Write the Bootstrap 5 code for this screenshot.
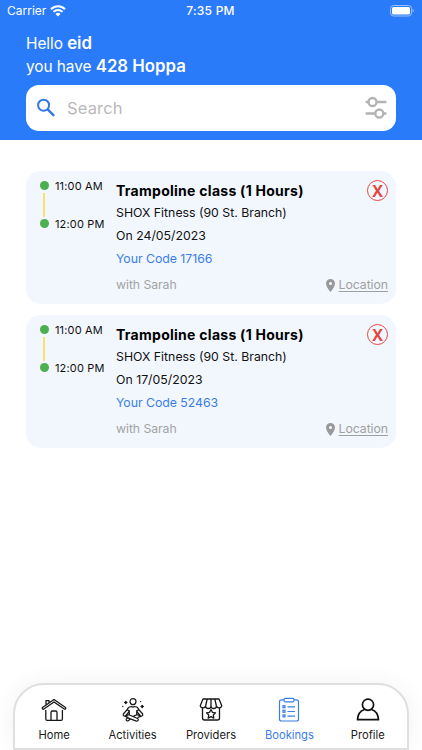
<!DOCTYPE html>
<html lang="en">
<head>
<meta charset="utf-8">
<meta name="viewport" content="width=device-width, initial-scale=1">
<title>Bookings</title>
<link href="https://cdn.jsdelivr.net/npm/bootstrap@5.3.0/dist/css/bootstrap.min.css" rel="stylesheet">
<style>
body{font-family:Inter,"Liberation Sans",sans-serif;color:#111;height:750px;overflow:hidden}
svg{display:block;flex:none}
.top{height:140px;background:#2a7bfa}
.status{height:22px;padding:0 8px 0 7px;font-size:12px;line-height:22px}
.status>*{flex:1 1 0}
.clock{font-weight:500;font-size:12px;letter-spacing:.25px}
.hello{padding:10px 26px 0;font-size:15.4px;line-height:23px;letter-spacing:-.05px}
.hello b{font-weight:600;font-size:16.8px;letter-spacing:0}
.search{height:46px;margin:7px 26px 0;border-radius:13px;padding:0 9px 0 10px}
.search input{font-size:16.5px;color:#555;padding:0 0 0 11px;letter-spacing:.15px}
.search input::placeholder{color:#b9b9b9;opacity:1}
.bookings{padding:31px 26px 0;gap:11px}
.booking{height:133px;background:#f2f7fe;border-radius:15px;padding:0 8px 0 14px}
.times{width:76px;padding-top:7px;font-size:11px;line-height:16px;letter-spacing:.15px}
.slot{gap:6px;height:16px}
.slot i{width:9px;height:9px;border-radius:50%;background:#4caf50;margin-top:-2px}
.link-line{width:2px;height:24px;margin:-1px 0 -1px 3px;background:#f5e36b}
.info{font-size:12.3px;line-height:22.8px;padding-top:8px}
.info h2{font-size:14px;line-height:23px;font-weight:700;color:#000;margin:0;letter-spacing:.27px}
.code{color:#3b7de6;letter-spacing:-.03px}
.soft{color:#a3a3a3}
.foot{margin-top:4px;letter-spacing:-.08px}
.foot a{color:#a0a0a0;text-underline-offset:2px}
.cancel{width:21px;height:21px;border:1px solid #e5463f;border-radius:50%;color:#e5463f;font:700 16px/1 "Open Sans",sans-serif;background:none;padding:0}
.tabs{height:67px;margin:0 13px 0 13px;border:2px solid #dfdfdf;border-radius:31px 31px 0 0;background:#fff;box-shadow:0 0 24px rgba(0,0,0,.055)}
.tab{width:78.6px;padding-top:12px;color:#1a1a1a;font-size:11.2px;line-height:15px}
.tab svg{margin-bottom:5px}
.tab.current{color:#3b7de6}
</style>
<script src="https://cdn.jsdelivr.net/npm/bootstrap@5.3.0/dist/js/bootstrap.bundle.min.js"></script>
</head>
<body class="d-flex flex-column bg-white">
<header class="top text-white">
  <div class="status d-flex align-items-center">
    <div class="d-flex align-items-center gap-1"><span>Carrier</span>
      <svg width="16" height="12" viewBox="0 0 16 12" fill="none" stroke="#fff" stroke-width="2"><path d="M1 4.2a10 10 0 0 1 14 0M3.500 6.900a6.400 6.400 0 0 1 9 0"/><path d="M8 11.500 5.500 9a3.500 3.500 0 0 1 5 0z" fill="#fff" stroke="none"/></svg>
    </div>
    <div class="clock text-center">7:35 PM</div>
    <div class="d-flex justify-content-end">
      <svg width="24" height="12" viewBox="0 0 24 12"><rect x=".5" y=".5" width="21" height="10.5" rx="3" fill="none" stroke="#9cc1fd"/><rect x="2" y="2" width="18" height="7.5" rx="1.5" fill="#fff"/><path d="M22.7 4v3.5q1.3-.6 1.3-1.7T22.7 4" fill="#9cc1fd"/></svg>
    </div>
  </div>
  <div class="hello"><div>Hello <b>eid</b></div><div>you have <b>428 Hoppa</b></div></div>
  <div class="search bg-white d-flex align-items-center">
    <svg width="20" height="20" viewBox="0 0 20 20" fill="none" stroke="#3478e5" stroke-width="2"><circle cx="7.6" cy="7.2" r="5.5"/><path d="m11.7 11.3 6.4 6.5" stroke-width="2.4"/></svg>
    <input class="form-control border-0 shadow-none bg-transparent" placeholder="Search" aria-label="Search">
    <svg width="22" height="24" viewBox="0 0 22 24" fill="none" stroke="#b3b3b3" stroke-width="2.3" stroke-linecap="round"><path d="M1.500 6h2M12 6h8.500M1.500 17.500h8.500M18.500 17.500h2"/><circle cx="7.500" cy="6" r="4"/><circle cx="14.300" cy="17.500" r="4"/></svg>
  </div>
</header>

<main class="bookings d-flex flex-column flex-grow-1">
  <article class="booking d-flex">
    <div class="times">
      <div class="slot d-flex align-items-center"><i></i><span>11:00 AM</span></div>
      <div class="link-line"></div>
      <div class="slot d-flex align-items-center"><i></i><span>12:00 PM</span></div>
    </div>
    <div class="info flex-grow-1">
      <div class="d-flex justify-content-between align-items-center"><h2>Trampoline class (1 Hours)</h2><button class="cancel d-flex align-items-center justify-content-center" aria-label="Cancel">X</button></div>
      <div>SHOX Fitness (90 St. Branch)</div>
      <div>On 24/05/2023</div>
      <div class="code">Your Code 17166</div>
      <div class="foot soft d-flex justify-content-between"><span>with Sarah</span>
        <span class="d-flex align-items-center gap-1"><svg width="9" height="13" viewBox="0 0 9 13"><path fill="#999" fill-rule="evenodd" d="M4.500 0A4.500 4.500 0 0 0 0 4.500C0 7.800 4.500 13 4.500 13S9 7.800 9 4.500A4.500 4.500 0 0 0 4.500 0m0 2.900a1.600 1.600 0 1 1 0 3.200 1.600 1.600 0 0 1 0-3.200"/></svg><a href="#">Location</a></span></div>
    </div>
  </article>
  <article class="booking d-flex">
    <div class="times">
      <div class="slot d-flex align-items-center"><i></i><span>11:00 AM</span></div>
      <div class="link-line"></div>
      <div class="slot d-flex align-items-center"><i></i><span>12:00 PM</span></div>
    </div>
    <div class="info flex-grow-1">
      <div class="d-flex justify-content-between align-items-center"><h2>Trampoline class (1 Hours)</h2><button class="cancel d-flex align-items-center justify-content-center" aria-label="Cancel">X</button></div>
      <div>SHOX Fitness (90 St. Branch)</div>
      <div>On 17/05/2023</div>
      <div class="code">Your Code 52463</div>
      <div class="foot soft d-flex justify-content-between"><span>with Sarah</span>
        <span class="d-flex align-items-center gap-1"><svg width="9" height="13" viewBox="0 0 9 13"><path fill="#999" fill-rule="evenodd" d="M4.500 0A4.500 4.500 0 0 0 0 4.500C0 7.800 4.500 13 4.500 13S9 7.800 9 4.500A4.500 4.500 0 0 0 4.500 0m0 2.900a1.600 1.600 0 1 1 0 3.200 1.600 1.600 0 0 1 0-3.200"/></svg><a href="#">Location</a></span></div>
    </div>
  </article>
</main>

<nav class="tabs d-flex justify-content-center flex-shrink-0">
  <a class="tab d-flex flex-column align-items-center text-decoration-none" href="#">
    <svg width="26" height="26" viewBox="0 0 26 26" fill="none" stroke="#181818" stroke-width="1.300" stroke-linejoin="round"><path d="M4.800 13v9q0 1.300 1.300 1.300h14q1.300 0 1.300-1.300v-9M10 23v-7.500q0-1.500 1.500-1.500h3q1.500 0 1.500 1.500V23"/><path d="M13 2.500 1.500 10.500q-.6.700 0 1.400.6.600 1.400.1L13 5l10.200 7q.8.400 1.300-.2.600-.7 0-1.300zM5 8V3.600h3v2.300"/></svg>Home</a>
  <a class="tab d-flex flex-column align-items-center text-decoration-none" href="#">
    <svg width="26" height="26" viewBox="0 0 26 26" fill="none" stroke="#181818" stroke-width="1.200" stroke-linejoin="round" stroke-linecap="round"><circle cx="13" cy="4.600" r="3"/><path d="M11.500 9.500Q8 9.800 7.300 12.500L3.300 17q-.6 1.200.7 1.900l4 1.500M14.500 9.500q3.500.3 4.200 3l4 4.500q.6 1.200-.7 1.900l-4 1.500M9.300 13.500v4L5 19.300M16.700 13.500v4l4.300 1.800M11.500 9.500q1.500 1.300 3 0M9 17.700l8.500 3.800q1.500 1 .3 2.300-.8.500-2 .1L7 20.600M17 17.700l-3 1.200M10.500 22l-2.300 1.800q-1.300.3-2-.7-.3-1.200.8-1.900l1-.5M7.300 12.500l2 2-3.500 4M18.700 12.500l-2 2 3.500 4"/><path d="M5.800 4.500v2M4.800 5.500h2M22.200 8.500v2M21.200 9.500h2" stroke-width="1.600"/><path d="M2.800 9.500h.01M20.700 4.600h.01" stroke-width="1.300"/></svg>Activities</a>
  <a class="tab d-flex flex-column align-items-center text-decoration-none" href="#">
    <svg width="26" height="26" viewBox="0 0 26 26" fill="none" stroke="#181818" stroke-width="1.300" stroke-linejoin="round"><path d="M5 2h16l2.700 6.500a2.700 2.500 0 0 1-5.300.5 2.700 2.500 0 0 1-5.400 0 2.700 2.500 0 0 1-5.400 0 2.700 2.500 0 0 1-5.300-.5zM9.200 2 7.600 9M13 2v7M16.800 2l1.600 7M4.500 11v10q0 2 2 2h13q2 0 2-2V11"/><path d="m13 12.500 1.400 2.800 3.100.5-2.200 2.200.5 3.100-2.800-1.500-2.800 1.500.5-3.100-2.200-2.200 3.100-.5z"/></svg>Providers</a>
  <a class="tab current d-flex flex-column align-items-center text-decoration-none" href="#" aria-current="page">
    <svg width="26" height="26" viewBox="0 0 26 26" fill="none" stroke="#3b7de6" stroke-width="1.200"><path d="M8 2.800H5.500q-2 0-2 2V22q0 2 2 2h15q2 0 2-2V4.800q0-2-2-2H18"/><rect x="8" y="1.300" width="10" height="3.500" rx="1.200"/><rect x="7" y="8.700" width="2" height="2"/><rect x="7" y="13.300" width="2" height="2"/><rect x="7" y="17.900" width="2" height="2"/><path d="M11.500 9.900H19M11.500 14.500H19M11.500 19.100H19"/></svg>Bookings</a>
  <a class="tab d-flex flex-column align-items-center text-decoration-none" href="#">
    <svg width="26" height="26" viewBox="0 0 26 26" fill="none" stroke="#111" stroke-width="1.700" stroke-linejoin="round"><circle cx="13" cy="7.700" r="5.600"/><path d="M9.500 12.500Q3 14.500 2.500 22.700h21Q23 14.500 16.500 12.500"/></svg>Profile</a>
</nav>
</body>
</html>
